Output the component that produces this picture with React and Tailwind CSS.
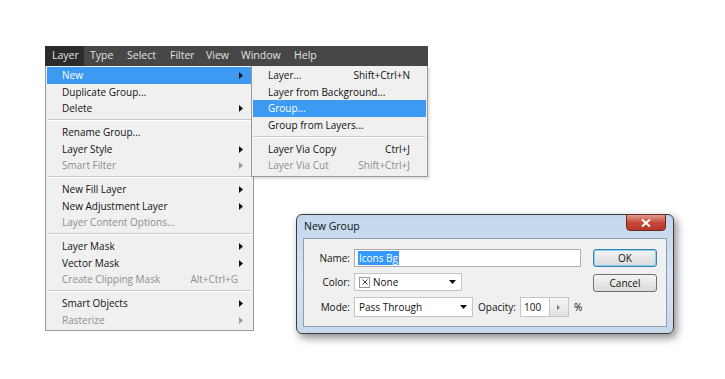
import React from "react";

const font = { fontFamily: '"Open Sans", "Noto Sans", sans-serif' };

// flecha de submenu
const Arrow = ({ muted }) => (
  <svg width="4" height="7" viewBox="0 0 4 7" className="shrink-0">
    <path d="M0 0 L4 3.5 L0 7 Z" fill={muted ? "#9a9a9a" : "#111"} />
  </svg>
);

const Sep = () => (
  <div className="h-[7.5px] flex flex-col justify-center mx-[2px]">
    <div className="h-px bg-[#c9c9c9]" />
    <div className="h-px bg-white" />
  </div>
);

const Row = ({ label, shortcut, sub, disabled, active, pr = "pr-[9px]" }) => (
  <div
    className={`h-[16.5px] flex items-center pl-[15px] pt-px ${pr} mx-[1px] ${
      active ? "bg-[#3d9af2] text-white" : disabled ? "text-[#8e8e8e]" : "text-[#111]"
    }`}
  >
    <span className="flex-1 whitespace-nowrap">{label}</span>
    {shortcut && <span className="whitespace-nowrap">{shortcut}</span>}
    {sub && <Arrow muted={disabled} />}
  </div>
);

const Input = ({ className, children }) => (
  <div className={`bg-white border border-[#abadb3] flex items-center ${className}`}>{children}</div>
);

const Select = ({ className, children }) => (
  <div className={`bg-white border border-[#c5c5c5] flex items-center pl-[4px] pr-[5px] ${className}`}>
    <div className="flex-1 flex items-center gap-[3px]">{children}</div>
    <svg width="7" height="4" viewBox="0 0 7 4">
      <path d="M0 0 H7 L3.5 4 Z" fill="#111" />
    </svg>
  </div>
);

const Button = ({ children, focus }) => (
  <div
    className={`w-[64px] h-[18px] rounded-[3px] flex items-center justify-center text-[#111] bg-gradient-to-b from-[#f4f4f4] to-[#dadada] border ${
      focus ? "border-[#3c7fb1] shadow-[inset_0_0_0_1px_#7ed3f7]" : "border-[#707070]"
    }`}
  >
    {children}
  </div>
);

export default function App() {
  return (
    <div className="w-[725px] h-[379px] bg-white relative overflow-hidden text-[10px]" style={font}>
      <div className="pt-[46px] pl-[45px] flex flex-col w-fit">
        {/* barra de menu */}
        <div className="w-[383px] h-[20px] bg-[#474747] flex items-center text-[#e2e2e2] text-[10.5px]">
          <div className="h-full w-[39px] bg-[#2b2b2b] pl-[7px] flex items-center">Layer</div>
          <div className="flex items-center pl-[6px]">
            <span className="w-[37px]">Type</span>
            <span className="w-[43px]">Select</span>
            <span className="w-[36px]">Filter</span>
            <span className="w-[35px]">View</span>
            <span className="w-[53px]">Window</span>
            <span>Help</span>
          </div>
        </div>

        <div className="flex items-start">
          {/* menu Layer */}
          <div className="w-[209px] bg-[#f0f0f0] border border-t-0 border-[#9a9a9a] pt-px pb-[2px]">
            <Row label="New" sub active />
            <Row label="Duplicate Group..." />
            <Row label="Delete" sub />
            <Sep />
            <Row label="Rename Group..." />
            <Row label="Layer Style" sub />
            <Row label="Smart Filter" sub disabled />
            <Sep />
            <Row label="New Fill Layer" sub />
            <Row label="New Adjustment Layer" sub />
            <Row label="Layer Content Options..." disabled />
            <Sep />
            <Row label="Layer Mask" sub />
            <Row label="Vector Mask" sub />
            <Row label="Create Clipping Mask" shortcut="Alt+Ctrl+G" disabled pr="pr-[14px]" />
            <Sep />
            <Row label="Smart Objects" sub />
            <Row label="Rasterize" sub disabled />
          </div>

          {/* submenu New */}
          <div className="-ml-[3px] w-[177px] bg-[#f0f0f0] border border-t-0 border-[#9a9a9a] pt-px pb-[2px] shadow-[2px_2px_2px_rgba(0,0,0,0.12)]">
            <Row label="Layer..." shortcut="Shift+Ctrl+N" pr="pr-[16px]" />
            <Row label="Layer from Background..." />
            <Row label="Group..." active />
            <Row label="Group from Layers..." />
            <Sep />
            <Row label="Layer Via Copy" shortcut="Ctrl+J" pr="pr-[16px]" />
            <Row label="Layer Via Cut" shortcut="Shift+Ctrl+J" disabled pr="pr-[16px]" />
          </div>
        </div>
      </div>

      {/* dialogo New Group */}
      <div className="absolute left-[296px] top-[214px] w-[378px] h-[120px] rounded-[6px] border border-[#3b3b3b] bg-gradient-to-b from-[#c2d6ec] via-[#d6e4f3] to-[#c8d9ec] shadow-[3px_4px_8px_rgba(0,0,0,0.45)] flex flex-col px-[6px] pb-[6px]">
        <div className="h-[23px] flex items-center pl-[1px] text-[#111] text-[10.5px] relative">
          <span>New Group</span>
          <div className="absolute right-[1px] -top-px w-[40px] h-[17px] rounded-b-[4px] border border-[#6b2a22] bg-gradient-to-b from-[#e19a8d] via-[#c7483a] to-[#b8352a] flex items-center justify-center">
            <svg width="10" height="8" viewBox="0 0 10 8">
              <path d="M1 0.5 L9 7.5 M9 0.5 L1 7.5" stroke="#fff" strokeWidth="2" />
            </svg>
          </div>
        </div>
        <div className="flex-1 min-w-0 bg-[#f0f0f0] border border-[#8d9cae] flex pt-[10px] pl-[6px] pr-[9px]">
          <div className="flex flex-col gap-[6px] text-[#111]">
            <div className="flex items-center gap-[4px]">
              <span className="w-[40px] text-right">Name:</span>
              <Input className="w-[227px] h-[18px] border-[#7fb0dc] pl-[3px]">
                <span className="bg-[#3399ff] text-white px-px leading-[14px]">Icons Bg</span>
              </Input>
            </div>
            <div className="flex items-center gap-[4px]">
              <span className="w-[40px] text-right">Color:</span>
              <Select className="w-[108px] h-[18px]">
                <span className="w-[11px] h-[11px] border border-[#9a9a9a] flex items-center justify-center">
                  <svg width="6" height="6" viewBox="0 0 6 6">
                    <path d="M0.5 0.5 L5.5 5.5 M5.5 0.5 L0.5 5.5" stroke="#444" strokeWidth="1" />
                  </svg>
                </span>
                <span>None</span>
              </Select>
            </div>
            <div className="flex items-center gap-[4px]">
              <span className="w-[40px] text-right">Mode:</span>
              <Select className="w-[119px] h-[20px]">
                <span>Pass Through</span>
              </Select>
              <span className="ml-[1px]">Opacity:</span>
              <div className="flex items-center h-[20px] border border-[#c5c5c5] bg-white">
                <span className="w-[28px] pl-[3px]">100</span>
                <div className="w-[19px] h-full bg-gradient-to-b from-[#f6f6f6] to-[#e2e2e2] border-l border-[#c5c5c5] flex items-center justify-center">
                  <svg width="3" height="5" viewBox="0 0 3 5">
                    <path d="M0 0 L3 2.5 L0 5 Z" fill="#6a7d96" />
                  </svg>
                </div>
              </div>
              <span className="ml-[1px]">%</span>
            </div>
          </div>
          <div className="ml-auto flex flex-col gap-[7px]">
            <Button focus>OK</Button>
            <Button>Cancel</Button>
          </div>
        </div>
      </div>
    </div>
  );
}
